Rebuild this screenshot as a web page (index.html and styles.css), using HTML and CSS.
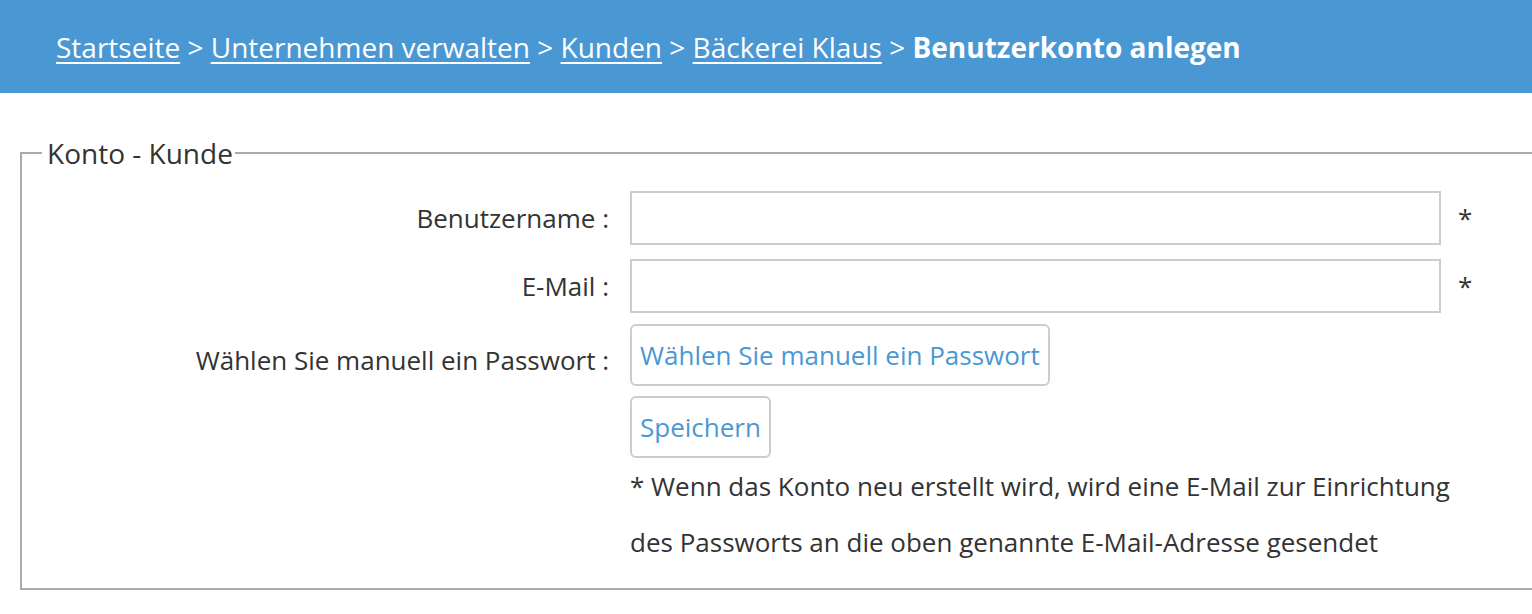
FILE: index.html
```html
<!DOCTYPE html>
<html lang="de">
<head>
<meta charset="utf-8">
<title>Benutzerkonto anlegen</title>
<link rel="stylesheet" href="styles.css">
</head>
<body>
<header class="topbar">
  <nav class="crumbs">
    <a href="#">Startseite</a> &gt; <a href="#">Unternehmen verwalten</a> &gt; <a href="#">Kunden</a> &gt; <a href="#">Bäckerei Klaus</a> &gt; <strong>Benutzerkonto anlegen</strong>
  </nav>
</header>
<main class="content">
  <fieldset class="box">
    <legend class="box-title">Konto - Kunde</legend>
    <div class="form-grid">
      <label class="lbl row1" for="user">Benutzername :</label>
      <input class="field row1" id="user" type="text">
      <span class="req row1">*</span>

      <label class="lbl row2" for="mail">E-Mail :</label>
      <input class="field row2" id="mail" type="text">
      <span class="req row2">*</span>

      <span class="lbl row3">Wählen Sie manuell ein Passwort :</span>
      <div class="cell row3"><button class="btn" type="button">Wählen Sie manuell ein Passwort</button></div>
      <span></span>

      <span></span>
      <div class="cell row4"><button class="btn" type="button">Speichern</button></div>
      <span></span>

      <span></span>
      <p class="note">* Wenn das Konto neu erstellt wird, wird eine E-Mail zur Einrichtung des Passworts an die oben genannte E-Mail-Adresse gesendet</p>
    </div>
  </fieldset>
</main>
</body>
</html>
```
FILE: styles.css
```css
html, body {
  margin: 0;
  padding: 0;
  overflow: hidden;
}
body {
  font-family: "Open Sans", "Liberation Sans", sans-serif;
  color: #333;
  background: #fff;
}
.topbar {
  background: #4a98d3;
  height: 93px;
  display: flex;
  align-items: center;
  padding-left: 56px;
  box-sizing: border-box;
}
.crumbs {
  color: #fff;
  font-size: 28px;
  line-height: 38px;
}
.crumbs a {
  color: #fff;
  text-decoration: underline;
  text-underline-offset: 4px;
  text-decoration-thickness: 2px;
}
.crumbs strong {
  font-weight: 700;
}
.content {
  padding: 43px 0 0 20px;
}
.box {
  margin: 0;
  width: 1560px;
  box-sizing: border-box;
  border: 2px solid #aaa;
  padding: 21px 0 18px 0;
}
.box-title {
  font-size: 28px;
  line-height: 34px;
  padding: 0 2px 0 5px;
  margin-left: 20px;
  color: #333;
}
.form-grid {
  display: grid;
  grid-template-columns: 587px 811px auto;
  column-gap: 21px;
  align-items: center;
}
.lbl {
  text-align: right;
  font-size: 26px;
  line-height: 36px;
}
.row1 { margin-bottom: 14px; }
.row2 { margin-bottom: 11px; }
.field {
  width: 811px;
  height: 54px;
  box-sizing: border-box;
  border: 2px solid #ccc;
  border-radius: 0;
  padding: 0 10px;
  font: inherit;
  font-size: 26px;
  background: #fff;
}
.req {
  font-size: 26px;
  line-height: 36px;
  margin-left: -4px;
}
.cell {
  display: flex;
}
.btn {
  font-family: "Open Sans", "Liberation Sans", sans-serif;
  font-size: 26px;
  line-height: 36px;
  color: #4a98d3;
  background: #fff;
  border: 2px solid #ccc;
  border-radius: 6px;
  padding: 11px 8px;
  margin: 0 0 10px 0;
  cursor: pointer;
}
.note {
  grid-column: 2 / 4;
  margin: -10px 0 0 0;
  max-width: 840px;
  font-size: 26px;
  line-height: 56px;
}
```
